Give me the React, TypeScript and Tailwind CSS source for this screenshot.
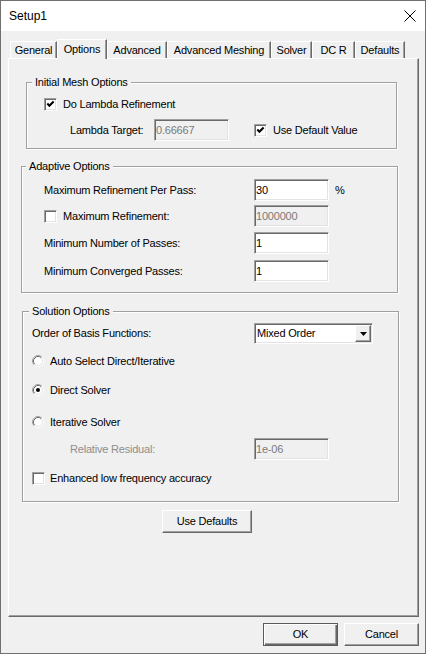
import React from "react";

const tabs = [
  { label: "General", cls: "w-[47px]" },
  { label: "Options", cls: "w-[50px]", active: true },
  { label: "Advanced", cls: "w-[60px]" },
  { label: "Advanced Meshing", cls: "w-[104px]" },
  { label: "Solver", cls: "w-[41px]" },
  { label: "DC R", cls: "w-[43px]" },
  { label: "Defaults", cls: "w-[50px]" },
];

const sunken =
  "border border-t-[#a0a0a0] border-l-[#a0a0a0] border-b-white border-r-white shadow-[inset_1px_1px_0_#696969,inset_-1px_-1px_0_#e3e3e3]";

const raised =
  "border border-t-white border-l-white border-r-[#696969] border-b-[#696969] shadow-[inset_-1px_-1px_0_#a0a0a0]";

const Check = ({ checked }: { checked?: boolean }) => (
  <div className={`w-[13px] h-[13px] shrink-0 bg-white flex items-center justify-center ${sunken}`}>
    {checked && (
      <svg width="9" height="9" viewBox="0 0 9 9">
        <polyline points="1.3,3.6 3.4,5.7 7.6,1.5" fill="none" stroke="#000" strokeWidth="2.1" />
      </svg>
    )}
  </div>
);

const Radio = ({ checked }: { checked?: boolean }) => (
  <svg width="12" height="12" viewBox="0 0 12 12" className="shrink-0">
    <circle cx="6" cy="6" r="5" fill="#fff" />
    <path d="M2.11 9.89 A5.5 5.5 0 0 1 9.89 2.11" fill="none" stroke="#a0a0a0" />
    <path d="M9.89 2.11 A5.5 5.5 0 0 1 2.11 9.89" fill="none" stroke="#fff" />
    <path d="M2.82 9.18 A4.5 4.5 0 0 1 9.18 2.82" fill="none" stroke="#696969" />
    <path d="M9.18 2.82 A4.5 4.5 0 0 1 2.82 9.18" fill="none" stroke="#e3e3e3" />
    {checked && <circle cx="6" cy="6" r="2" fill="#000" />}
  </svg>
);

const TextBox = ({ value, disabled }: { value: string; disabled?: boolean }) => (
  <div
    className={`w-[75px] h-[22px] shrink-0 flex items-center pl-[1px] ${sunken} ${
      disabled ? "bg-[#f0f0f0] text-[#7a7a7a]" : "bg-white text-black"
    }`}
  >
    {value}
  </div>
);

const Button = ({ label, cls, isDefault }: { label: string; cls: string; isDefault?: boolean }) =>
  isDefault ? (
    <div
      className={`${cls} h-[23px] flex items-center justify-center border border-[#5a5a5a] shadow-[inset_1px_1px_0_#fff,inset_-1px_-1px_0_#696969,inset_-2px_-2px_0_#a0a0a0]`}
    >
      {label}
    </div>
  ) : (
    <div className={`${cls} h-[23px] flex items-center justify-center ${raised}`}>{label}</div>
  );

export default function App() {
  return (
    <div className="w-[426px] h-[654px] border border-[#707070] bg-[#f0f0f0] flex flex-col text-[11px] leading-[13px] tracking-[-0.2px] text-black font-['Liberation_Sans',Arial,sans-serif] select-none">
      {/* Title bar */}
      <div className="h-[30px] shrink-0 bg-white flex items-center justify-between pl-[8px] pr-[9px]">
        <span className="text-[12px] tracking-normal">Setup1</span>
        <svg width="12" height="12" viewBox="0 0 12 12">
          <path d="M0.5 0.5 L11.5 11.5 M11.5 0.5 L0.5 11.5" stroke="#000" strokeWidth="1" />
        </svg>
      </div>

      <div className="flex-1 flex flex-col pl-[7px] pr-[6px] pt-[8px]">
        {/* Tabs */}
        <div className="h-[19px] flex items-end pl-[2px]">
          {tabs.map((t) =>
            t.active ? (
              <div
                key={t.label}
                className={`${t.cls} h-[20px] -mb-[1px] relative z-10 bg-[#f0f0f0] flex items-center justify-center border-l border-t border-r border-t-white border-l-white border-r-[#696969] shadow-[inset_-1px_0_0_#a0a0a0]`}
              >
                {t.label}
              </div>
            ) : (
              <div
                key={t.label}
                className={`${t.cls} h-[17px] flex items-center justify-center border-l border-t border-r border-t-white border-l-white border-r-[#696969] shadow-[inset_-1px_0_0_#a0a0a0]`}
              >
                {t.label}
              </div>
            )
          )}
        </div>

        {/* Panel */}
        <div className="h-[559px] flex flex-col border border-t-white border-l-white border-r-[#696969] border-b-[#696969] shadow-[inset_-1px_-1px_0_#a0a0a0]">
          {/* Initial Mesh Options */}
          <fieldset className="mt-[17px] ml-[17px] w-[371px] pb-[7px] border border-[#a0a0a0] shadow-[inset_1px_1px_0_#fff,1px_1px_0_#fff]">
            <legend className="ml-[5px] px-[3px] leading-[13px] bg-[#f0f0f0]">Initial Mesh Options</legend>
            <div className="mt-[9px] h-[13px] pl-[17px] flex items-center gap-[6px]">
              <Check checked />
              <span>Do Lambda Refinement</span>
            </div>
            <div className="mt-[8px] h-[22px] pl-[43px] flex items-center">
              <span className="w-[84px]">Lambda Target:</span>
              <TextBox value="0.66667" disabled />
              <div className="ml-[25px] flex items-center gap-[6px]">
                <Check checked />
                <span>Use Default Value</span>
              </div>
            </div>
          </fieldset>

          {/* Adaptive Options */}
          <fieldset className="mt-[11px] ml-[12px] w-[377px] pb-[10px] border border-[#a0a0a0] shadow-[inset_1px_1px_0_#fff,1px_1px_0_#fff]">
            <legend className="ml-[4px] px-[3px] leading-[13px] bg-[#f0f0f0]">Adaptive Options</legend>
            <div className="mt-[6px] h-[22px] pl-[22px] flex items-center">
              <span className="w-[210px]">Maximum Refinement Per Pass:</span>
              <TextBox value="30" />
              <span className="ml-[6px]">%</span>
            </div>
            <div className="mt-[4px] h-[22px] pl-[22px] flex items-center">
              <div className="w-[210px] flex items-center gap-[6px]">
                <Check />
                <span>Maximum Refinement:</span>
              </div>
              <TextBox value="1000000" disabled />
            </div>
            <div className="mt-[5px] h-[22px] pl-[22px] flex items-center">
              <span className="w-[210px]">Minimum Number of Passes:</span>
              <TextBox value="1" />
            </div>
            <div className="mt-[6px] h-[22px] pl-[22px] flex items-center">
              <span className="w-[210px]">Minimum Converged Passes:</span>
              <TextBox value="1" />
            </div>
          </fieldset>

          {/* Solution Options */}
          <fieldset className="mt-[12px] ml-[13px] w-[377px] pb-[16px] border border-[#a0a0a0] shadow-[inset_1px_1px_0_#fff,1px_1px_0_#fff]">
            <legend className="ml-[6px] px-[3px] leading-[13px] bg-[#f0f0f0]">Solution Options</legend>
            <div className="mt-[5px] h-[21px] pl-[9px] flex items-center">
              <span className="w-[222px]">Order of Basis Functions:</span>
              <div className={`w-[119px] h-[21px] bg-white flex items-center ${sunken}`}>
                <span className="pl-[2px]">Mixed Order</span>
                <div className={`ml-auto mr-[1px] w-[16px] h-[17px] bg-[#f0f0f0] flex items-center justify-center ${raised}`}>
                  <svg width="7" height="4" viewBox="0 0 7 4">
                    <polygon points="0,0 7,0 3.5,4" fill="#000" />
                  </svg>
                </div>
              </div>
            </div>
            <div className="mt-[9px] h-[16px] pl-[9px] flex items-center gap-[6px]">
              <Radio />
              <span>Auto Select Direct/Iterative</span>
            </div>
            <div className="mt-[13px] h-[16px] pl-[9px] flex items-center gap-[6px]">
              <Radio checked />
              <span>Direct Solver</span>
            </div>
            <div className="mt-[16px] h-[16px] pl-[9px] flex items-center gap-[6px]">
              <Radio />
              <span>Iterative Solver</span>
            </div>
            <div className="mt-[8px] h-[22px] pl-[47px] flex items-center">
              <span className="w-[184px] text-[#8e8e8e]">Relative Residual:</span>
              <TextBox value="1e-06" disabled />
            </div>
            <div className="mt-[12px] h-[13px] pl-[9px] flex items-center gap-[5px]">
              <Check />
              <span>Enhanced low frequency accuracy</span>
            </div>
          </fieldset>

          <div className="mt-[8px] ml-[153px]">
            <Button label="Use Defaults" cls="w-[90px]" />
          </div>
        </div>

        {/* Bottom buttons */}
        <div className="mt-[6px] flex justify-end gap-[6px]">
          <Button label="OK" cls="w-[75px]" isDefault />
          <Button label="Cancel" cls="w-[75px]" />
        </div>
      </div>
    </div>
  );
}
